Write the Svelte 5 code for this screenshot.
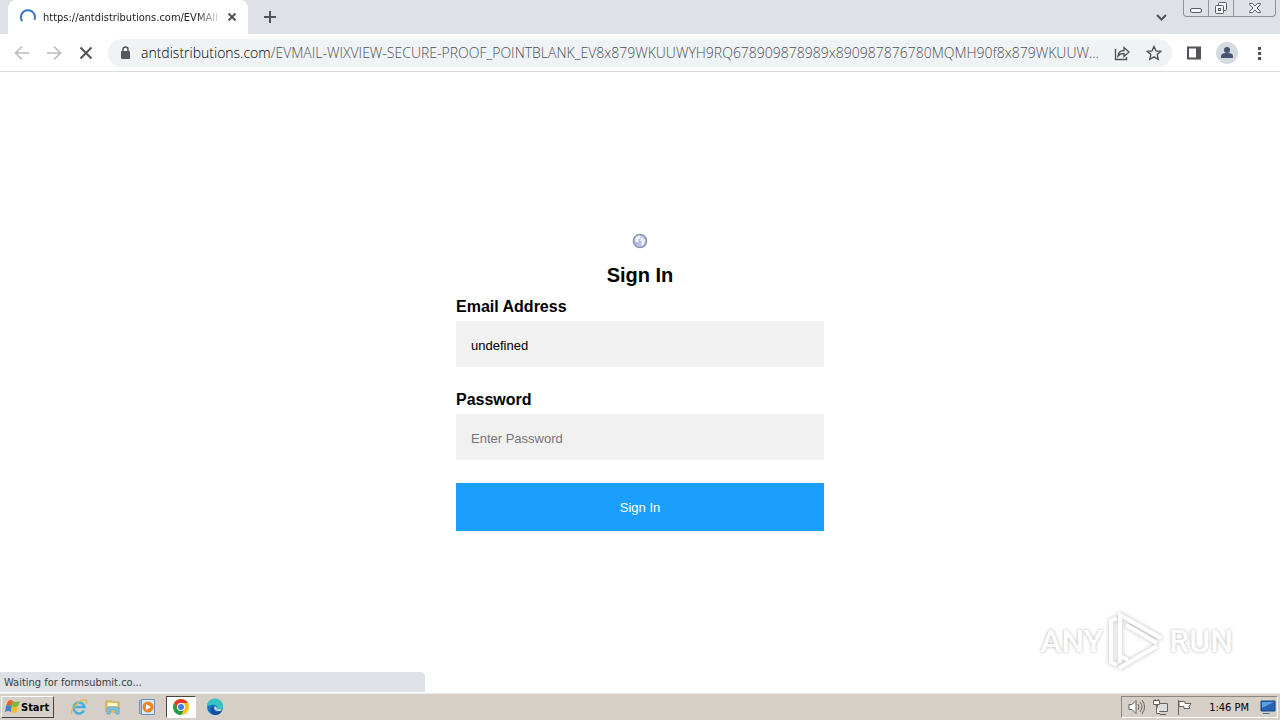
<script>
  // --- STATE ---
  let email = "undefined";
  let password = "";

  const host = "antdistributions.com";
  const path =
    "/EVMAIL-WIXVIEW-SECURE-PROOF_POINTBLANK_EV8x879WKUUWYH9RQ678909878989x890987876780MQMH90f8x879WKUUW...";
</script>

<div class="desktop">
  <header class="tab-strip">
    <div class="tab">
      <svg class="spinner" width="16" height="16" viewBox="0 0 16 16">
        <path d="M2.2 12.2A7 7 0 1 1 14.4 10.8" />
      </svg>
      <span class="tab-title">https://antdistributions.com/EVMAIL</span>
      <button class="icon-btn" aria-label="Close tab">
        <svg width="16" height="16" viewBox="0 0 16 16"><path d="M4.5 4.5l7 7M11.5 4.5l-7 7" /></svg>
      </button>
    </div>
    <button class="icon-btn new-tab" aria-label="New tab">
      <svg width="16" height="16" viewBox="0 0 16 16"><path d="M8 2v12M2 8h12" /></svg>
    </button>
    <button class="icon-btn tab-search" aria-label="Search tabs">
      <svg width="16" height="16" viewBox="0 0 16 16"><path d="M4 6l4.500 4.500L13 6" /></svg>
    </button>
    <div class="window-controls">
      <button aria-label="Minimize">
        <svg width="14" height="14" viewBox="0 0 14 14"><rect x="1.500" y="7.500" width="11" height="4" rx="1.500" /></svg>
      </button>
      <button aria-label="Restore">
        <svg width="14" height="14" viewBox="0 0 14 14">
          <path d="M4.500 4.500V2.500q0-1 1-1h6q1 0 1 1v6q0 1-1 1h-2" />
          <rect x="1.500" y="4.500" width="8" height="8" rx="1" />
          <rect x="4.500" y="7.500" width="2" height="2" />
        </svg>
      </button>
      <button class="close" aria-label="Close">
        <svg width="14" height="14" viewBox="0 0 14 14">
          <path d="M1.500 2.500h3L7 5l2.500-2.500h3v1L9 7l3.500 3.500v1h-3L7 9l-2.500 2.500h-3v-1L5 7 1.500 3.500z" />
        </svg>
      </button>
    </div>
  </header>

  <nav class="toolbar">
    <button class="icon-btn disabled" aria-label="Back">
      <svg width="16" height="16" viewBox="0 0 16 16"><path d="M15 8H2M8 1.500L1.500 8 8 14.500" /></svg>
    </button>
    <button class="icon-btn disabled" aria-label="Forward">
      <svg width="16" height="16" viewBox="0 0 16 16"><path d="M1 8h13M8 1.500L14.500 8 8 14.500" /></svg>
    </button>
    <button class="icon-btn" aria-label="Stop loading">
      <svg width="16" height="16" viewBox="0 0 16 16"><path d="M2.500 2.500l11 11M13.500 2.500l-11 11" /></svg>
    </button>
    <div class="address-bar">
      <svg class="lock" width="16" height="16" viewBox="0 0 16 16">
        <rect x="3" y="6" width="9" height="8" rx="1" />
        <path d="M5 6V4.500a2.500 2.500 0 0 1 5 0V6" />
      </svg>
      <span class="url"><b>{host}</b>{path}</span>
      <button class="icon-btn thin" aria-label="Share">
        <svg width="16" height="16" viewBox="0 0 16 16">
          <path d="M1.500 4v10.500h11V12M4 11c.5-4 2.500-5.500 6-5.500v-3L15 7l-5 4.500v-3c-2.500 0-4.500.5-6 2.500z" />
        </svg>
      </button>
      <button class="icon-btn thin" aria-label="Bookmark">
        <svg width="16" height="16" viewBox="0 0 16 16">
          <path d="M8 1.500l2 4.400 4.700.5-3.500 3.200 1 4.700L8 11.900l-4.200 2.400 1-4.700-3.500-3.200 4.700-.5z" />
        </svg>
      </button>
    </div>
    <button class="icon-btn" aria-label="Side panel">
      <svg width="16" height="16" viewBox="0 0 16 16">
        <path d="M2 2.500h12v11H2z" />
        <path class="solid" d="M10 2h4v12h-4z" />
      </svg>
    </button>
    <button class="icon-btn" aria-label="Profile">
      <svg width="22" height="22" viewBox="0 0 22 22">
        <circle cx="11" cy="11" r="11" fill="#d5dae2" stroke="none" />
        <circle cx="11" cy="8" r="3" fill="#46526f" stroke="none" />
        <path d="M5 16v-1.500c0-3 3-3.500 6-3.500s6 .5 6 3.500V16z" fill="#46526f" stroke="none" />
      </svg>
    </button>
    <button class="icon-btn" aria-label="Menu">
      <svg width="16" height="16" viewBox="0 0 16 16">
        <path class="solid" d="M6 2h3v3H6zM6 7h3v3H6zM6 12h3v3H6z" />
      </svg>
    </button>
  </nav>

  <main class="page">
    <form class="login" on:submit|preventDefault>
      <svg class="globe" width="16" height="16" viewBox="0 0 16 16">
        <circle cx="8" cy="8" r="6.600" fill="#b4c0e2" stroke="#8b90ae" stroke-width="1.400" />
        <path d="M4 4l3-1.500 2 1-1 2-2 1 1 2-2 1-2-2zM10 4l3 3-1 4-2 2-1-2 1-2-2-2z" fill="#f1f5fd" />
      </svg>
      <h1>Sign In</h1>
      <label for="email">Email Address</label>
      <input id="email" type="text" bind:value={email} />
      <label for="password">Password</label>
      <input id="password" type="password" placeholder="Enter Password" bind:value={password} />
      <button class="submit-btn" type="submit">Sign In</button>
    </form>

    <div class="watermark">
      <span>ANY</span>
      <svg width="60" height="64" viewBox="0 0 60 64">
        <path d="M11 9L5 12v41l6 3 M14 54V6l41 23M20 16l31 18M14 47l8 4M13 59l38-22" />
      </svg>
      <span>RUN</span>
    </div>

    <div class="status">Waiting for formsubmit.co...</div>
  </main>

  <footer class="taskbar">
    <button class="start">
      <svg width="17" height="16" viewBox="0 0 17 16">
        <path d="M4 2q3-2 5 0L8 7Q6 5 2 7z" fill="#e8642c" />
        <path d="M9 2q3 2 7 0l-2 5q-3 2-6 0z" fill="#79b83b" />
        <path d="M2 7q3-2 6 0l-1 6q-3-2-6 0z" fill="#3f83d1" />
        <path d="M8 7q3 2 6 0l-1 6q-3 2-6 0z" fill="#f5bd2a" />
      </svg>
      Start
    </button>
    <button class="task" aria-label="Internet Explorer">
      <svg width="18" height="18" viewBox="0 0 18 18">
        <path d="M14 12.500a5.500 5.500 0 1 1 .500-3.500H5" fill="none" stroke="#45aee2" stroke-width="2.500" />
        <path d="M2 16C-1 12 11 0 16 2q2 1 0 4" fill="none" stroke="#e3b94a" stroke-width="1.200" />
      </svg>
    </button>
    <button class="task" aria-label="Explorer">
      <svg width="18" height="18" viewBox="0 0 18 18">
        <path d="M2 3h5l1 1h7v10H2z" fill="#efcf6b" stroke="#c9a646" />
        <path d="M4 5h9v3H4z" fill="#fff8d8" />
        <path d="M3 16v-5q0-2 2-2h8q2 0 2 2v5h-3v-4H6v4z" fill="#7ec3e6" stroke="#589bc4" stroke-width=".7" />
      </svg>
    </button>
    <button class="task" aria-label="Media Player">
      <svg width="18" height="18" viewBox="0 0 18 18">
        <path d="M1.500 2.500h11v13h-11z" fill="#a9c9e8" stroke="#6593bf" />
        <path d="M3.500 1.500h13v15h-13z" fill="#d7e9f7" stroke="#6593bf" />
        <circle cx="10" cy="9" r="5.500" fill="#f08519" />
        <path d="M8 6l5 3-5 3z" fill="#fff" />
      </svg>
    </button>
    <button class="task active" aria-label="Chrome">
      <svg width="18" height="18" viewBox="0 0 18 18">
        <circle cx="9" cy="9" r="8" fill="#fbc116" />
        <path d="M2.100 5A8 8 0 0 1 15.900 5H9a4 4 0 0 0-3.500 6z" fill="#e33b2e" />
        <path d="M2.100 5A8 8 0 0 0 9 17l3.500-6a4 4 0 0 1-7 0z" fill="#229a4c" />
        <circle cx="9" cy="9" r="4" fill="#fff" />
        <circle cx="9" cy="9" r="3" fill="#3b7de9" />
      </svg>
    </button>
    <button class="task" aria-label="Edge">
      <svg width="18" height="18" viewBox="0 0 18 18">
        <circle cx="9" cy="9" r="8" fill="#1673c8" />
        <path d="M1 9a8 8 0 0 1 16-1c0 3-2 4-5 4-2 0-2-1-1-2 1-3-5-5-10-1z" fill="#35c3c6" />
        <path d="M9 8c-3 1-2 6 3 6l4-1c-2 4-7 5-10 3-3-3-1-8 3-8z" fill="#115099" />
        <path d="M9 8c-2 2 0 5 3 5 2 0 3 0 4-1l-2-1c-3 1-4 0-3-1z" fill="#d8d2ca" />
      </svg>
    </button>
    <div class="tray">
      <svg width="18" height="18" viewBox="0 0 18 18">
        <path d="M2 6.500h3l4-4v13l-4-4H2z" fill="#fff" />
        <path d="M11 6q2 3 0 6M13 4q4 5 0 10M15 2q5 7 0 14" />
      </svg>
      <svg width="18" height="18" viewBox="0 0 18 18">
        <path d="M6.500 5.500h10v8h-10zM9 16.500h6" fill="#ddd" />
        <path d="M2.500 2.500h6v4h-6zM4 1v2M7 1v2M5.500 7v8.500H9" fill="#fff" />
      </svg>
      <svg width="18" height="18" viewBox="0 0 18 18">
        <path d="M3.500 2v15M4 3.500h6v2h6l-2 3 1 2H9v-2H4z" fill="#fff" />
      </svg>
      <time>1:46 PM</time>
      <svg width="18" height="18" viewBox="0 0 18 18">
        <path d="M2 3h14v10H2z" fill="#2464b5" stroke="#174780" />
        <path d="M3 4h12L3 10z" fill="#5b9de0" stroke="none" />
        <path d="M4 15.500h7" stroke="#537499" />
      </svg>
    </div>
  </footer>
</div>

<style>
  :global(body) {
    margin: 0;
    background: #fff;
  }

  .desktop {
    display: flex;
    flex-direction: column;
    height: 100vh;
    overflow: hidden;
    font-family: "DejaVu Sans Condensed", "DejaVu Sans", sans-serif;
    font-size: 11px;
    color: #202124;
  }

  button {
    font-family: inherit;
    padding: 0;
    border: none;
    background: none;
  }

  svg {
    display: block;
    flex-shrink: 0;
  }

  .icon-btn svg {
    fill: none;
    stroke: #505357;
    stroke-width: 2;
  }

  .icon-btn .solid {
    fill: #505357;
    stroke: none;
  }

  .icon-btn.thin svg {
    stroke-width: 1.4;
  }

  .icon-btn.disabled svg {
    stroke: #b9bbbe;
    stroke-width: 1.6;
  }

  /* --- Tabs --- */
  .tab-strip {
    display: flex;
    align-items: center;
    height: 34px;
    flex-shrink: 0;
    background: #dee1e6;
  }

  .tab {
    display: flex;
    align-items: center;
    gap: 7px;
    width: 220px;
    height: 34px;
    margin-left: 8px;
    padding: 0 8px 0 12px;
    border-radius: 8px 8px 0 0;
    background: #fff;
  }

  .spinner {
    fill: none;
    stroke: #3b76cc;
    stroke-width: 2;
  }

  .tab-title {
    flex: 1;
    overflow: hidden;
    white-space: nowrap;
    mask-image: linear-gradient(to right, #000 88%, rgba(0, 0, 0, 0.2));
  }

  .new-tab {
    margin-left: 14px;
  }

  .tab-search {
    margin-left: auto;
  }

  .window-controls {
    display: flex;
    align-self: flex-start;
    height: 16px;
    margin: 0 4px 0 14px;
    border: 1px solid #8e939c;
    border-top: none;
    border-radius: 0 0 4px 4px;
  }

  .window-controls button {
    display: flex;
    align-items: center;
    justify-content: center;
    width: 25px;
    border-right: 1px solid #8e939c;
  }

  .window-controls .close {
    width: 41px;
    border-right: none;
  }

  .window-controls svg {
    fill: #f5f6f8;
    stroke: #575c66;
  }

  /* --- Toolbar --- */
  .toolbar {
    display: flex;
    align-items: center;
    gap: 14px;
    height: 37px;
    flex-shrink: 0;
    padding: 0 12px 0 14px;
    border-bottom: 1px solid #d9dbde;
    background: #fff;
  }

  .toolbar .disabled {
    margin-right: 2px;
  }

  .address-bar {
    display: flex;
    flex: 1;
    align-items: center;
    gap: 16px;
    min-width: 0;
    height: 28px;
    padding: 0 10px;
    border-radius: 14px;
    background: #f0f3f5;
  }

  .lock {
    margin-right: -9px;
    fill: #55585c;
  }

  .lock path {
    fill: none;
    stroke: #55585c;
    stroke-width: 1.5;
  }

  .url {
    flex: 1;
    margin-right: -8px;
    overflow: hidden;
    white-space: nowrap;
    font-family: "Open Sans", "Noto Sans", sans-serif;
    font-size: 14px;
    font-weight: 300;
    color: #4b4f54;
  }

  .url b {
    font-weight: 300;
    color: #000;
  }

  /* --- Page --- */
  .page {
    position: relative;
    display: flex;
    flex: 1;
    align-items: center;
    justify-content: center;
    font-family: "Liberation Sans", Arial, sans-serif;
  }

  .login {
    display: flex;
    flex-direction: column;
    width: 368px;
    padding-bottom: 2px;
    color: #000;
  }

  .globe {
    align-self: center;
  }

  h1 {
    margin: 14px 0 10px;
    font-size: 20px;
    line-height: 24px;
    text-align: center;
  }

  label {
    padding-top: 1px;
    margin-bottom: 5px;
    font-size: 16px;
    font-weight: 700;
    line-height: 18px;
  }

  input {
    box-sizing: border-box;
    height: 46px;
    margin: 0 0 23px;
    padding: 4px 15px 0;
    border: none;
    border-radius: 0;
    background: #f1f1f1;
    font-family: inherit;
    font-size: 13px;
    color: #000;
  }

  input::placeholder {
    color: #757575;
  }

  .submit-btn {
    height: 48px;
    padding-top: 2px;
    background: #1a9fff;
    font-size: 13px;
    color: #fff;
  }

  .watermark {
    position: absolute;
    right: 47px;
    bottom: 20px;
    display: flex;
    align-items: center;
    gap: 3px;
    font-family: Roboto, "Liberation Sans", sans-serif;
    font-size: 32px;
    font-weight: 500;
    color: #fff;
    text-shadow: 0 0 3px #aaa;
  }

  .watermark svg {
    fill: none;
    stroke: #fff;
    stroke-width: 4;
    filter: drop-shadow(0 0 2px #bbb);
  }

  .status {
    position: absolute;
    bottom: 1px;
    left: 0;
    box-sizing: border-box;
    width: 425px;
    height: 20px;
    padding-left: 4px;
    border-radius: 0 4px 0 0;
    background: #dee1e6;
    font-family: "DejaVu Sans Condensed", "DejaVu Sans", sans-serif;
    line-height: 22px;
    color: #3c4043;
  }

  /* --- Taskbar --- */
  .taskbar {
    display: flex;
    align-items: center;
    height: 26px;
    flex-shrink: 0;
    padding: 0 2px 0 1px;
    border-top: 1px solid #eeece8;
    background: #d5cfc7;
    color: #000;
  }

  .start {
    display: flex;
    align-items: center;
    width: 53px;
    height: 22px;
    margin-right: 8px;
    padding-left: 2px;
    border: 1px solid;
    border-color: #fff #444 #444 #fff;
    font-size: 11px;
    font-weight: 700;
  }

  .task {
    display: flex;
    align-items: center;
    justify-content: center;
    width: 30px;
    height: 22px;
    margin: 0 2px;
  }

  .task.active {
    border: 1px solid;
    border-color: #444 #fff #fff #444;
    background: #fff;
  }

  .tray {
    display: flex;
    align-items: center;
    gap: 6px;
    height: 20px;
    margin-left: auto;
    padding-left: 5px;
    border: 1px solid;
    border-color: #8a867f #fff #fff #8a867f;
  }

  .tray svg {
    fill: none;
    stroke: #66635e;
  }

  .tray time {
    margin: 0 4px 0 10px;
  }
</style>
